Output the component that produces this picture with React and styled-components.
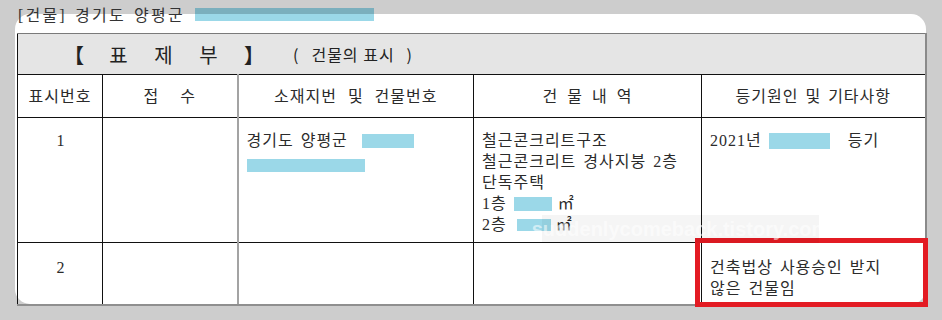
import React from 'react';
import styled, { createGlobalStyle } from 'styled-components';

const GlobalStyle = createGlobalStyle`
  html, body {
    margin: 0;
    background: #cdcdcd;
    font-family: "Liberation Serif", "Noto Sans CJK KR", serif;
    color: #2b2b2b;
  }
`

const Page = styled.div`
  width: 942px;
  height: 320px;
  overflow: hidden;
`

// the caption runs over the top edge of the sheet, so it is lifted above it
const Caption = styled.div`
  position: relative;
  z-index: 1;
  height: 28px;
  margin-bottom: -14px;
  padding-left: 18px;
  display: flex;
  align-items: center;
  gap: 10px;
  font-size: 16px;
  letter-spacing: 2.2px;
  word-spacing: 2px;
  color: #333;
`

// masked-out text: the top part sits over the grey page, the bottom over the white sheet
const Redact = styled.span`
  display: inline-block;
  width: ${p => p.$w}px;
  height: ${p => p.$h || 14}px;
  margin-left: ${p => p.$ml || 0}px;
  margin-right: ${p => p.$mr || 0}px;
  margin-top: ${p => p.$mt || 0}px;
  vertical-align: middle;
  background: ${p => p.$split
    ? 'linear-gradient(#7bafbd 0 6px, #9bd8e8 6px)'
    : '#9bd8e8'};
`

const Sheet = styled.div`
  position: relative;
  margin-left: 15px;
  width: 911px;
  height: 290px;
  box-sizing: border-box;
  padding: 19px 0 0 2px;
  background: #fff;
  border-radius: 15px;
`

const Table = styled.table`
  border-collapse: collapse;
  table-layout: fixed;
  width: 908px;
  font-size: 16px;
  letter-spacing: 1px;
`

const TitleCell = styled.td`
  height: 40px;
  padding: 0 0 0 46px;
  background: #e5e5e5;
  border-top: 1px solid #7a7a7a;
  border-left: 1px solid #111;
  border-right: 2px solid #8a8a8a;
  border-bottom: 1px solid #111;
`

const TitleLine = styled.div`
  display: flex;
  align-items: center;
  gap: 25px;
  font-family: "Noto Sans CJK KR", sans-serif;
  color: #222;
`

const Big = styled.span`
  width: 20px;
  font-size: 20px;
  text-align: center;
  font-weight: ${p => (p.$bold ? 700 : 400)};
`

const Sub = styled.span`
  margin-left: 4px;
  display: flex;
  gap: 12px;
  font-size: 16px;
  letter-spacing: 1px;
`

const Row = styled.tr`
  height: ${p => p.$h}px;
`

const Cell = styled.td`
  position: relative;
  padding: ${p => (p.$head ? '0' : `${p.$pt || 12}px 6px 0 8px`)};
  vertical-align: ${p => (p.$head ? 'middle' : 'top')};
  text-align: ${p => (p.$center ? 'center' : 'left')};
  border-left: ${p => (p.$soft ? '2px solid #a3a3a3' : '1px solid #111')};
  border-right: ${p => (p.$edge ? '2px solid #8a8a8a' : 'none')};
  border-bottom: ${p => (p.$last ? '2px solid #8f8f8f' : '1px solid #111')};
  line-height: 21px;
  word-spacing: ${p => p.$ws || 2}px;
  white-space: nowrap;
`

const Line = styled.div`
  display: flex;
  align-items: center;
  height: 21px;
`

const Highlight = styled.div`
  position: absolute;
  top: -5px;
  left: -7px;
  right: -3px;
  bottom: -3px;
  border: 5px solid #e31b23;
  pointer-events: none;
`

const Watermark = styled.div`
  position: absolute;
  left: 527px;
  top: 201px;
  width: 277px;
  height: 28px;
  display: flex;
  align-items: center;
  justify-content: center;
  background: rgba(0, 0, 0, 0.04);
  font-family: "Liberation Sans", sans-serif;
  font-weight: 700;
  font-size: 20px;
  color: rgba(255, 255, 255, 0.55);
  pointer-events: none;
`

const columns = [85, 135, 236, 228, 224]

export default function App() {
  return (
    <Page>
      <GlobalStyle />
      <Caption>
        <span>[건물] 경기도 양평군</span>
        <Redact $w={179} $h={13} $split />
      </Caption>
      <Sheet>
        <Table>
          <colgroup>
            {columns.map((w, i) => <col key={i} style={{ width: w }} />)}
          </colgroup>
          <tbody>
            <tr>
              <TitleCell colSpan={5}>
                <TitleLine>
                  <Big $bold>【</Big>
                  <Big>표</Big>
                  <Big>제</Big>
                  <Big>부</Big>
                  <Big $bold>】</Big>
                  <Sub>
                    <span>(</span>
                    <span>건물의 표시</span>
                    <span>)</span>
                  </Sub>
                </TitleLine>
              </TitleCell>
            </tr>
            <Row $h={43}>
              <Cell $head $center>표시번호</Cell>
              <Cell $head $center $ws={16}>접 수</Cell>
              <Cell $head $center $soft $ws={6}>소재지번 및 건물번호</Cell>
              <Cell $head $center $ws={4}>건 물 내 역</Cell>
              <Cell $head $center $edge>등기원인 및 기타사항</Cell>
            </Row>
            <Row $h={125}>
              <Cell $center>1</Cell>
              <Cell />
              <Cell $soft>
                <Line>경기도 양평군<Redact $w={52} $ml={14} /></Line>
                <Line><Redact $w={118} $h={13} $mt={8} /></Line>
              </Cell>
              <Cell>
                <Line>철근콘크리트구조</Line>
                <Line>철근콘크리트 경사지붕 2층</Line>
                <Line>단독주택</Line>
                <Line>1층<Redact $w={38} $ml={7} $mr={6} />㎡</Line>
                <Line>2층<Redact $w={34} $h={12} $ml={10} $mr={5} />㎡</Line>
              </Cell>
              <Cell $edge>
                <Line>2021년<Redact $w={61} $h={16} $ml={7} $mr={18} />등기</Line>
              </Cell>
            </Row>
            <Row $h={62}>
              <Cell $center $last $pt={14}>2</Cell>
              <Cell $last />
              <Cell $soft $last />
              <Cell $last />
              <Cell $edge $last $pt={14}>
                <Line>건축법상 사용승인 받지</Line>
                <Line>않은 건물임</Line>
                <Highlight />
              </Cell>
            </Row>
          </tbody>
        </Table>
        <Watermark>suddenlycomeback.tistory.com</Watermark>
      </Sheet>
    </Page>
  )
}
